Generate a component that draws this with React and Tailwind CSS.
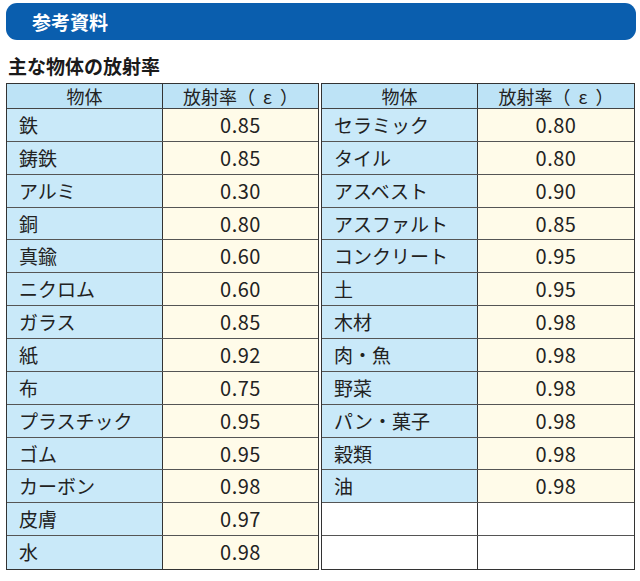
import React from "react";

const left = [
  ["鉄", "0.85"],
  ["鋳鉄", "0.85"],
  ["アルミ", "0.30"],
  ["銅", "0.80"],
  ["真鍮", "0.60"],
  ["ニクロム", "0.60"],
  ["ガラス", "0.85"],
  ["紙", "0.92"],
  ["布", "0.75"],
  ["プラスチック", "0.95"],
  ["ゴム", "0.95"],
  ["カーボン", "0.98"],
  ["皮膚", "0.97"],
  ["水", "0.98"],
];

const right = [
  ["セラミック", "0.80"],
  ["タイル", "0.80"],
  ["アスベスト", "0.90"],
  ["アスファルト", "0.85"],
  ["コンクリート", "0.95"],
  ["土", "0.95"],
  ["木材", "0.98"],
  ["肉・魚", "0.98"],
  ["野菜", "0.98"],
  ["パン・菓子", "0.98"],
  ["穀類", "0.98"],
  ["油", "0.98"],
  null,
  null,
];

function Table({ rows, className }) {
  return (
    <div className={`border border-[#333] ${className}`}>
      <div className="grid grid-cols-[156px_1fr] h-[25px] bg-[#bde3f6] border-b border-[#444] text-[18px] leading-[24px] text-[#222]">
        <div className="text-center border-r border-[#333]">物体</div>
        <div className="text-center whitespace-pre">放射率（  ε  ）</div>
      </div>
      {rows.map((r, i) => (
        <div
          key={i}
          className={`grid grid-cols-[156px_1fr] text-[#222] ${
            i % 7 === 3 ? "h-[32px]" : "h-[33px]"
          } ${i < rows.length - 1 ? "border-b border-[#555]" : ""}`}
        >
          <div
            className={`pl-[12px] border-r border-[#333] text-[19px] leading-[31px] ${
              r ? "bg-[#c9e9f9]" : "bg-white"
            }`}
          >
            {r ? r[0] : ""}
          </div>
          <div
            className={`text-center text-[20px] leading-[31px] tracking-[0.5px] ${
              r ? "bg-[#fffbe9]" : "bg-white"
            }`}
          >
            {r ? r[1] : ""}
          </div>
        </div>
      ))}
    </div>
  );
}

export default function App() {
  return (
    <div
      className="w-[640px] h-[581px] bg-white pt-[3px] overflow-hidden"
      style={{ fontFamily: '"Noto Sans CJK JP", "Noto Sans", sans-serif' }}
    >
      <div className="ml-[6px] mr-[4px] h-[37px] rounded-[11px] bg-[#0a5eae] flex items-center pl-[26px]">
        <span className="text-white font-bold text-[19px] leading-none">参考資料</span>
      </div>
      <div className="pl-[8px] mt-[13px] text-[19px] font-bold leading-[26px] text-[#1a1a1a]">
        主な物体の放射率
      </div>
      <div className="flex pl-[6px] mt-[4px]">
        <Table rows={left} className="w-[313px]" />
        <Table rows={right} className="w-[314px] ml-[2px]" />
      </div>
    </div>
  );
}
